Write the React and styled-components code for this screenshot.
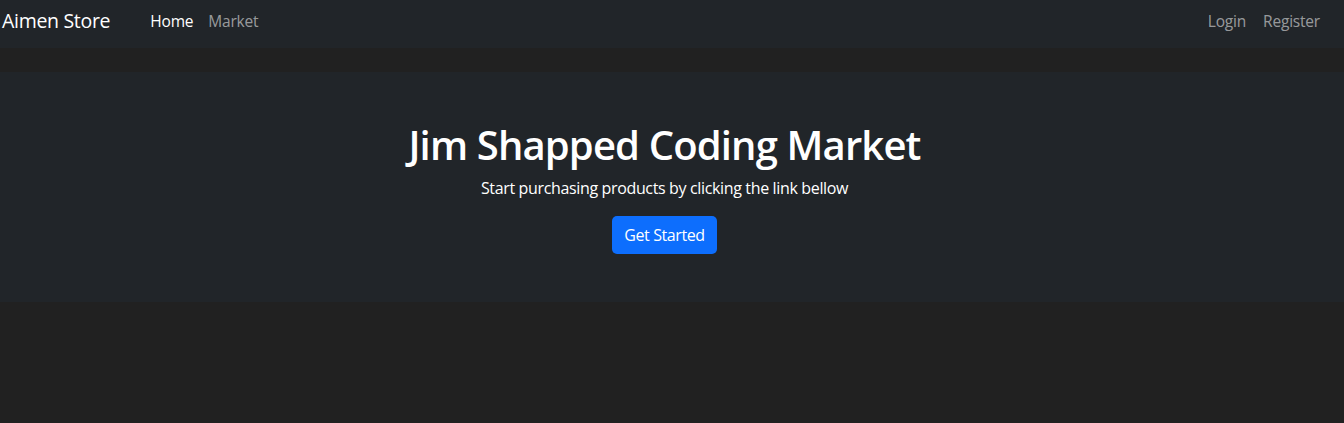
import React from 'react';
import styled, { createGlobalStyle } from 'styled-components';

const GlobalStyle = createGlobalStyle`
  html, body {
    margin: 0;
    padding: 0;
    background-color: #212121;
    font-family: 'Open Sans', 'Noto Sans', sans-serif;
  }
`;

const Page = styled.div`
  min-height: 423px;
  background-color: #212121;
`;

const Navbar = styled.nav`
  display: flex;
  align-items: center;
  justify-content: space-between;
  height: 48px;
  box-sizing: border-box;
  padding: 0 24px 7px 2px;
  background-color: #212529;
`;

const Side = styled.div`
  display: flex;
  align-items: center;
`;

const Brand = styled.a`
  color: #fff;
  font-size: 19.5px;
  letter-spacing: -0.3px;
  margin-right: 40px;
  text-decoration: none;
`;

const NavLinks = styled.ul`
  display: flex;
  gap: ${({ gap }) => gap || 15}px;
  list-style: none;
  margin: 0;
  padding: 0;
`;

const NavLink = styled.a`
  color: ${({ active }) => (active ? '#fff' : 'rgba(255, 255, 255, 0.55)')};
  font-size: 15.5px;
  letter-spacing: -0.2px;
  text-decoration: none;
`;

const Hero = styled.section`
  display: flex;
  flex-direction: column;
  align-items: center;
  margin-top: 24px;
  height: 230px;
  box-sizing: border-box;
  padding: 47px 15px 0 0;
  background-color: #212529;
  color: #fff;
`;

const Title = styled.h1`
  margin: 0 0 5px;
  font-size: 40px;
  font-weight: 600;
  line-height: 52px;
  letter-spacing: -0.85px;
`;

const Lead = styled.p`
  margin: 0 0 16px;
  font-size: 16px;
  line-height: 24px;
  letter-spacing: -0.35px;
`;

const Button = styled.button`
  height: 38px;
  padding: 0 12px;
  border: none;
  border-radius: 5px;
  background-color: #0d6efd;
  color: #fff;
  font-family: inherit;
  font-size: 16px;
  letter-spacing: -0.4px;
  cursor: pointer;
`;

function App() {
  return (
    <Page>
      <GlobalStyle />
      <Navbar>
        <Side>
          <Brand href="#">Aimen Store</Brand>
          <NavLinks>
            <li>
              <NavLink href="#" active>
                Home
              </NavLink>
            </li>
            <li>
              <NavLink href="#">Market</NavLink>
            </li>
          </NavLinks>
        </Side>
        <NavLinks gap={17}>
          <li>
            <NavLink href="#">Login</NavLink>
          </li>
          <li>
            <NavLink href="#">Register</NavLink>
          </li>
        </NavLinks>
      </Navbar>
      <Hero>
        <Title>Jim Shapped Coding Market</Title>
        <Lead>Start purchasing products by clicking the link bellow</Lead>
        <Button>Get Started</Button>
      </Hero>
    </Page>
  );
}

export default App;
